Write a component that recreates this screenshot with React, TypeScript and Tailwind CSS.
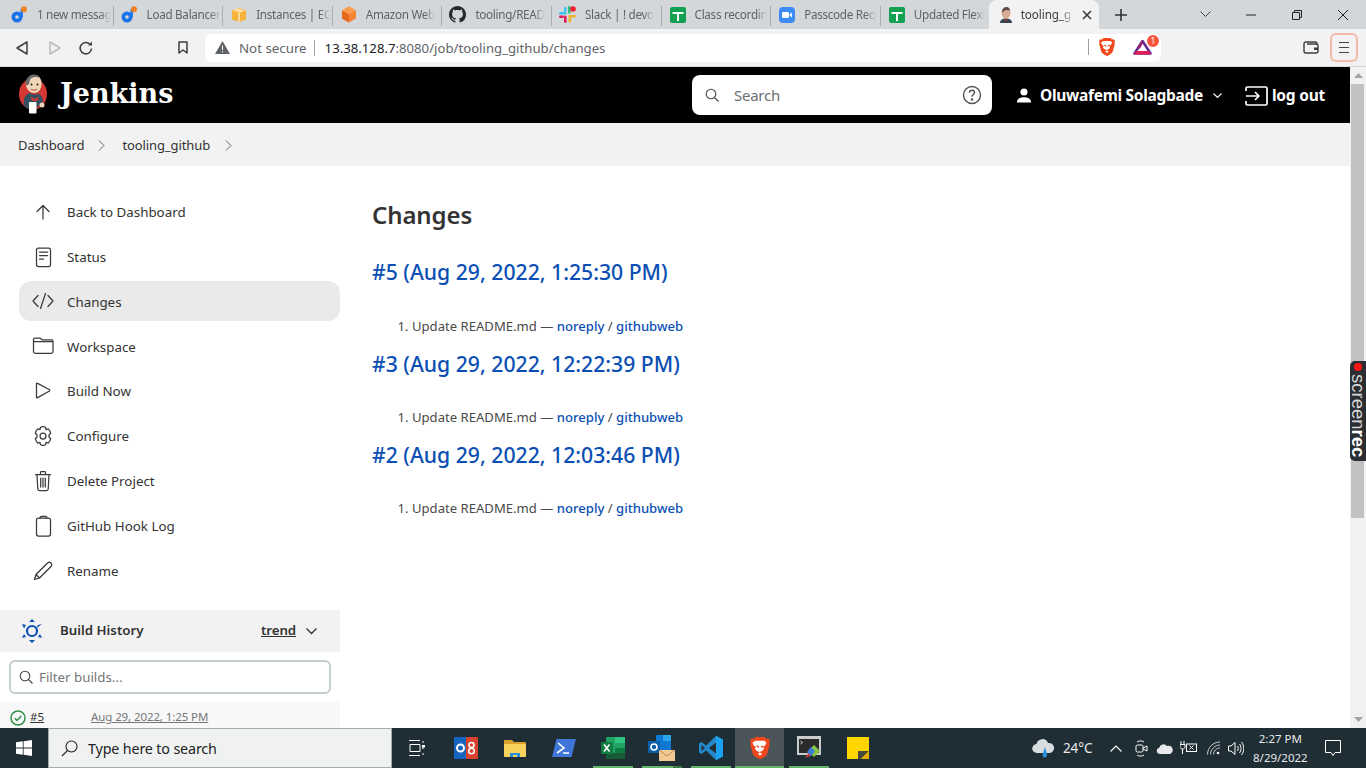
import React from "react";

function Sheets() {
  return (
    <svg width="16" height="16" viewBox="0 0 16 16">
      <rect width="16" height="16" rx="2" fill="#12a150" />
      <path d="M2.500 5h11v2h-4.500v7h-2V7H2.500z" fill="#fff" />
    </svg>
  );
}
function Drop() {
  return (
    <svg width="17" height="17" viewBox="0 0 17 17">
      <circle cx="6" cy="11" r="5.500" fill="#1a73e8" />
      <circle cx="6" cy="11" r="1.800" fill="#d3d7da" />
      <rect x="9.500" y="3" width="2.400" height="8" fill="#1a73e8" />
      <circle cx="13" cy="3.200" r="3" fill="#f58220" />
    </svg>
  );
}
function Box() {
  return (
    <svg width="16" height="16" viewBox="0 0 16 16">
      <path d="M1 3.500 8 1l7 2.500v9L8 15l-7-2.500z" fill="#f7b23b" />
      <path d="M1 3.500 8 6l7-2.500L8 1z" fill="#fcd079" />
      <path d="M8 6v9" stroke="#fff" strokeWidth="1" />
      <path d="M4.500 2.200 11.500 4.800" stroke="#fff" strokeWidth="0.800" />
    </svg>
  );
}
function Hex() {
  return (
    <svg width="16" height="17" viewBox="0 0 16 17">
      <path d="M8 .5 15 4.500v8L8 16.500 1 12.500v-8z" fill="#f58536" />
      <path d="M8 .5 15 4.500 8 8.500 1 4.500z" fill="#fb9d50" />
      <path d="M8 8.500v8L1 12.500v-8z" fill="#e8691d" />
    </svg>
  );
}
function GitHubMark() {
  return (
    <svg width="17" height="17" viewBox="0 0 16 16" fill="#24292f">
      <path d="M8 0C3.580 0 0 3.580 0 8c0 3.540 2.290 6.530 5.470 7.590.4.070.55-.17.55-.38 0-.19-.01-.82-.01-1.490-2.010.37-2.530-.49-2.690-.94-.09-.23-.48-.94-.82-1.130-.28-.15-.68-.52-.01-.53.63-.01 1.080.58 1.230.82.72 1.210 1.870.87 2.330.66.07-.52.28-.87.51-1.070-1.780-.2-3.640-.89-3.640-3.950 0-.87.31-1.590.82-2.150-.08-.2-.36-1.020.08-2.120 0 0 .67-.21 2.200.82.64-.18 1.320-.27 2-.27s1.360.09 2 .27c1.530-1.040 2.200-.82 2.200-.82.44 1.100.16 1.920.08 2.120.51.56.82 1.270.82 2.150 0 3.070-1.870 3.750-3.650 3.950.29.25.54.73.54 1.480 0 1.070-.01 1.930-.01 2.200 0 .21.15.46.55.38A8.010 8.010 0 0 0 16 8c0-4.420-3.580-8-8-8z" />
    </svg>
  );
}
function Slack() {
  return (
    <svg width="17" height="17" viewBox="0 0 17 17">
      <rect x="0" y="6" width="7.500" height="2.600" rx="1.300" fill="#36c5f0" />
      <rect x="5" y="1" width="2.600" height="5" rx="1.300" fill="#36c5f0" />
      <rect x="9" y="0" width="2.600" height="7.500" rx="1.300" fill="#2eb67d" />
      <circle cx="14" cy="3" r="2.800" fill="#f01e2c" />
      <rect x="9.500" y="9" width="7.500" height="2.600" rx="1.300" fill="#ecb22e" />
      <rect x="9.500" y="11" width="2.600" height="5.500" rx="1.300" fill="#ecb22e" />
      <rect x="5" y="9.500" width="2.600" height="7.500" rx="1.300" fill="#e01e5a" />
      <rect x="0" y="9.500" width="5" height="2.600" rx="1.300" fill="#e01e5a" />
    </svg>
  );
}
function Zoom() {
  return (
    <svg width="16" height="16" viewBox="0 0 16 16">
      <rect width="16" height="16" rx="4" fill="#3d8bf5" />
      <rect x="3" y="5" width="7" height="6" rx="1.200" fill="#fff" />
      <path d="M10.500 7.500 13 5.500v5l-2.500-2z" fill="#fff" />
    </svg>
  );
}
function JenkinsHead({ size = 16 }: { size?: number }) {
  return (
    <svg width={size} height={size} viewBox="0 0 16 16">
      <ellipse cx="8" cy="6" rx="4.500" ry="5.500" fill="#d9ab94" />
      <path d="M4 5c0-3 2-5 4.500-5S12 2 12 4c-2-1.500-5-1.500-6 0-.5 1-1 1.500-2 1z" fill="#5c4a42" />
      <path d="M2 16c0-3 2-4.500 6-4.500s6 1.500 6 4.500z" fill="#33424f" />
      <path d="M6 12.500 8 14l2-1.500-2-.5z" fill="#c6362c" />
    </svg>
  );
}
function JenkinsLogo() {
  return (
    <svg width="29" height="40" viewBox="0 0 29 40">
      <ellipse cx="14" cy="20" rx="14" ry="15.500" fill="#d33833" />
      <path d="M7 12c-1-6 3-11 8-11 5.500 0 8 5 7.500 9.500-.3 4-2 8-7 8.500-4 .3-7-3-8.500-7z" fill="#f0d6b7" />
      <path d="M7 11c-1-6 3-10.500 8-10.500 3 0 5 1.500 6 3.500-3-1.500-7-1.500-9.500 1-1 1.500-1 4-2 5.500-.8.700-1.800 1.300-2.500.500z" fill="#6d6b6d" />
      <path d="M5 31c-1-6 1-11 6-12 3 2 6 2 8 .5 4 2 5 5 5 8-1 1-3 2-3.500 4-2 2-5 4-9 4-3-.5-5-2-6.500-4.500z" fill="#335061" />
      <path d="M12 22.500 16 25l3.500-2.500-.5 4-3 .5-3.500-.5z" fill="#d33833" />
      <rect x="10" y="28" width="7.500" height="11.500" rx="1" fill="#fff" />
      <circle cx="23" cy="31" r="2.500" fill="#f0d6b7" />
      <circle cx="12.500" cy="10.500" r="1" fill="#222" />
      <circle cx="18.500" cy="10.500" r="1" fill="#222" />
      <path d="M12 15c2 1.500 4.500 1.500 6 0" stroke="#a04a3c" strokeWidth="1" fill="none" />
    </svg>
  );
}
function BraveLion({ size = 18 }: { size?: number }) {
  return (
    <svg width={size} height={size * 1.130} viewBox="0 0 18 20.500">
      <path d="M5 0h8l1.500 1.600 2-.3L18 3.200l-.6 1.800.5 1.500-2.300 8.500c-.4 1.400-1 2-2.200 2.800L9.700 20.200c-.5.300-.9.300-1.400 0l-3.700-2.400c-1.200-.8-1.800-1.400-2.200-2.800L.1 6.500.6 5 0 3.200 1.500 1.300l2 .3z" fill="#f1471d" />
      <path d="M5 3.500h8l1.800 1.500-1.300 3-1.800 1 1 1.500-1.500 2-1.700.6L9 14.500l-1.500-1.400-1.700-.6-1.500-2 1-1.500-1.800-1-1.300-3zM7 15l2-.5 2 .5-2 2z" fill="#fff" />
      <path d="M6 7.500l2 .8v1.500l-2-.8zM12 7.500l-2 .8v1.500l2-.8z" fill="#f1471d" />
    </svg>
  );
}
function Tab({ icon, text, w = "w-[109.600px]", sep = true }: { icon: React.ReactNode; text: string; w?: string; sep?: boolean }) {
  return (
    <div className={`${w} h-full flex items-center shrink-0`}>
      <div className="w-[24px] flex justify-end shrink-0">{icon}</div>
      <div className="ml-[9px] whitespace-nowrap text-[11.700px] tracking-[-0.300px] text-[#5f6368] [mask-image:linear-gradient(to_right,black_85%,transparent)]">
        {text}
      </div>
      {sep && <div className="ml-auto w-px h-[20px] mt-[2px] bg-[#a9adb0]" />}
    </div>
  );
}

function Ico({ children }: { children: React.ReactNode }) {
  return (
    <svg width="24" height="24" viewBox="0 0 24 24" fill="none" stroke="#3a3a3a" strokeWidth="1.250" strokeLinecap="round" strokeLinejoin="round">
      {children}
    </svg>
  );
}
const nav: { label: string; icon: React.ReactNode; active?: boolean }[] = [
  { label: "Back to Dashboard", icon: <Ico><path d="M12 19V5.500M6 11.500l6-6 6 6" /></Ico> },
  { label: "Status", icon: <Ico><rect x="5.500" y="3" width="14" height="18.500" rx="2" /><path d="M8.500 7h8M8.500 10.500h8M8.500 14h4" /></Ico> },
  { label: "Changes", active: true, icon: <Ico><path d="M7 6.500 2 12l5 5.500M17 6.500l5 5.500-5 5.500M14.500 4.500l-5 15" /></Ico> },
  { label: "Workspace", icon: <Ico><path d="M2.500 5.500c0-1 .7-1.500 1.500-1.500h5c1 0 1.200 1.800 2.700 1.800h8.800c1 0 1.500.7 1.500 1.700v10c0 1-.7 1.800-1.800 1.800H4.300c-1 0-1.800-.8-1.800-1.800zM2.500 7.500h19" /></Ico> },
  { label: "Build Now", icon: <Ico><path d="M5.500 4.500v14c0 .4.400.6.700.4L18.500 12c.4-.3.400-.9 0-1.200L6.200 4.100c-.3-.2-.7 0-.7.4z" /></Ico> },
  { label: "Configure", icon: <Ico><circle cx="12" cy="12" r="3" /><path d="M9.500 3.200c1.600-.8 3.400-.8 5 0l.5 2.400 2.300-.7c1.200 1.200 2 2.800 2.400 4.300L18 11v2l1.700 1.700c-.4 1.600-1.200 3.100-2.400 4.400L15 18.400l-.5 2.400c-1.600.7-3.400.7-5 0L9 18.400l-2.300.7c-1.200-1.300-2-2.800-2.400-4.400L6 13v-2L4.300 9.200c.4-1.500 1.200-3.100 2.400-4.300L9 5.600z" /></Ico> },
  { label: "Delete Project", icon: <Ico><path d="M4.500 5.500h15M9.500 5.500V3.300c0-.4.300-.8.800-.8h3.400c.5 0 .8.400.8.800v2.200M6 5.500l.8 14.500c0 .8.700 1.500 1.500 1.500h7.400c.8 0 1.500-.7 1.500-1.500L18 5.500M9.700 9v9M12 9v9M14.300 9v9" /></Ico> },
  { label: "GitHub Hook Log", icon: <Ico><rect x="5.500" y="4" width="14" height="18" rx="2" /><path d="M9 4c0-1 .7-1.700 1.700-1.700h3.600c1 0 1.700.7 1.700 1.700" /></Ico> },
  { label: "Rename", icon: <Ico><path d="M3.500 20.500l1.500-5L16.500 4c1-1 2.500-1 3.500 0s1 2.500 0 3.500L8.500 19zM5 15.500l3.500 3.500" /></Ico> },
];

function Build({ id, date, first }: { id: string; date: string; first?: boolean }) {
  return (
    <div className={first ? "" : "pt-[1px]"}>
      <h2 className="text-[21.200px] leading-[30px] font-medium text-[#0b4fb4] h-[30px]">
        {id} ({date})
      </h2>
      <ol className={`${first ? "mt-[30px]" : "mt-[29px]"} pl-[40px] list-decimal text-[13.100px] leading-[19px] text-[#4a4a4a] h-[19px]`}>
        <li>
          Update README.md — <a className="font-medium text-[#0b4fb4]">noreply</a> / <a className="font-medium text-[#0b4fb4]">githubweb</a>
        </li>
      </ol>
    </div>
  );
}

function TaskIcon({ children, active, run, dark }: { children: React.ReactNode; active?: boolean; run?: boolean; dark?: boolean }) {
  return (
    <div className={`w-[49px] h-full shrink-0 flex items-center justify-center relative ${active ? "bg-[#4b5559]" : ""}`}>
      {children}
      {run && (
        <div className={`absolute bottom-0 h-[2px] bg-[#63b568] ${active ? "inset-x-0" : "inset-x-[4.500px]"}`}>
          {dark && <div className="absolute right-0 top-0 h-full w-[9px] bg-[#3e7a45]" />}
        </div>
      )}
    </div>
  );
}

export default function App() {
  return (
    <div className="w-[1366px] h-[768px] overflow-hidden flex flex-col relative bg-white text-[#333] font-['Noto_Sans','Open_Sans',sans-serif]">
      {/* tab strip */}
      <div className="h-[29px] bg-[#d3d7da] flex items-stretch shrink-0 pl-[4px]">
        <Tab icon={<Drop />} text="1 new messag" />
        <Tab icon={<Drop />} text="Load Balancer" />
        <Tab icon={<Box />} text="Instances | EC" />
        <Tab icon={<Hex />} text="Amazon Web" />
        <Tab icon={<GitHubMark />} text="tooling/READ" />
        <Tab icon={<Slack />} text="Slack | ! devo" />
        <Tab icon={<Sheets />} text="Class recordin" />
        <Tab icon={<Zoom />} text="Passcode Req" />
        <Tab w="w-[108px]" sep={false} icon={<Sheets />} text="Updated Flexi" />
        <div className="w-[110px] h-full bg-[#f2f2f2] rounded-t-[8px] flex items-center shrink-0 pl-[9px]">
          <JenkinsHead />
          <div className="ml-[7px] w-[53px] whitespace-nowrap text-[11.700px] tracking-[-0.100px] text-[#3c4043] [mask-image:linear-gradient(to_right,black_75%,transparent)]">tooling_g</div>
          <svg className="ml-[8px]" width="10" height="10" viewBox="0 0 10 10" stroke="#333" strokeWidth="1.500"><path d="M1 1l8 8M9 1l-8 8" /></svg>
        </div>
        <div className="ml-[16px] flex items-center">
          <svg width="12" height="12" viewBox="0 0 12 12" stroke="#333" strokeWidth="1.600"><path d="M6 0v12M0 6h12" /></svg>
        </div>
        <div className="ml-auto flex items-center h-full">
          <div className="w-[46px] flex justify-center"><svg width="11" height="7" viewBox="0 0 11 7" stroke="#444" fill="none"><path d="M.5.500l5 5 5-5" /></svg></div>
          <div className="w-[46px] flex justify-center"><svg width="10" height="2" viewBox="0 0 10 2" stroke="#222"><path d="M0 1h10" /></svg></div>
          <div className="w-[46px] flex justify-center"><svg width="10" height="10" viewBox="0 0 10 10" stroke="#222" fill="none"><path d="M.5 2.500h7v7h-7zM2.500 2.500v-2h7v7h-2" /></svg></div>
          <div className="w-[46px] flex justify-center"><svg width="10" height="10" viewBox="0 0 10 10" stroke="#222" fill="none"><path d="M0 0l10 10M10 0L0 10" /></svg></div>
        </div>
      </div>
      {/* toolbar */}
      <div className="h-[38px] bg-[#f2f2f2] border-b border-[#d6d6d6] flex items-center shrink-0">
        <svg className="ml-[16px]" width="12" height="14" viewBox="0 0 12 14" fill="none" stroke="#3c4043" strokeWidth="1.500" strokeLinejoin="round"><path d="M11 1v12L1 7z" /></svg>
        <svg className="ml-[21px]" width="12" height="14" viewBox="0 0 12 14" fill="none" stroke="#b9bbbd" strokeWidth="1.500" strokeLinejoin="round"><path d="M1 1v12l10-6z" /></svg>
        <svg className="ml-[18px]" width="14" height="14" viewBox="0 0 14 14" fill="none" stroke="#3c4043" strokeWidth="1.600"><path d="M12.500 7.500a5.700 5.700 0 1 1-1.500-4.200" /><path d="M13 .5v4h-4" fill="#3c4043" stroke="none" /></svg>
        <svg className="ml-[85px]" width="10" height="13" viewBox="0 0 10 13" fill="none" stroke="#3c4043" strokeWidth="1.500" strokeLinejoin="round"><path d="M1 1h8v11L5 9l-4 3z" /></svg>
        <div className="ml-[17px] w-[956px] h-[28px] bg-white rounded-[6px] flex items-center text-[#5f6368]">
          <svg className="ml-[10px]" width="15" height="13" viewBox="0 0 15 13"><path d="M7.500 0 15 13H0z" fill="#5f6368" /><path d="M7 4.500h1V9H7zM7 10h1v1.200H7z" fill="#fff" /></svg>
          <span className="ml-[9px] mt-[2px] text-[13.300px]">Not secure</span>
          <div className="ml-[7px] w-px h-[16px] bg-[#9aa0a6]" />
          <span className="ml-[10px] mt-[2px] text-[13.180px]"><span className="text-[#202124]">13.38.128.7</span>:8080/job/tooling_github/changes</span>
          <div className="ml-auto flex items-center">
            <div className="w-px h-[16px] bg-[#9aa0a6]" />
            <div className="ml-[10px]"><BraveLion size={16} /></div>
            <div className="ml-[18px] relative">
              <svg width="19" height="16" viewBox="0 0 19 16"><path d="M9.500 2 17.500 14.500h-16z" fill="#fff" stroke="#662d91" strokeWidth="2.600" strokeLinejoin="round" /><path d="M1 15.500h17l-2-3.500H3z" fill="#e01e5a" /><path d="M9.500 1 4.500 9.500l2.500 0 2.500-4.500z" fill="#9e1f63" /></svg>
              <div className="absolute -top-[4px] -right-[7px] w-[12px] h-[12px] rounded-full bg-[#f8553e] text-white text-[8px] leading-[12px] text-center">1</div>
            </div>
            <div className="w-[9px]" />
          </div>
        </div>
        <svg className="ml-[142px] -mr-[1px]" width="16" height="13" viewBox="0 0 16 13" fill="none" stroke="#3c4043" strokeWidth="1.400"><path d="M14 3V2.500C14 1.500 13.500 1 12.500 1H3C1.800 1 1 1.800 1 3v7c0 1.200.8 2 2 2h10c1 0 2-.8 2-2V4.500C15 3.500 14 3 13 3H4" /><path d="M11 6.500h4v2.500h-4z" fill="#3c4043" stroke="none" /></svg>
        <div className="ml-[12px] w-[28px] h-[29px] border-2 border-[#f5b9aa] rounded-[6px] flex flex-col items-center justify-center gap-[3.500px]">
          <div className="w-[10px] h-[1.500px] bg-[#444]" />
          <div className="w-[10px] h-[1.500px] bg-[#444]" />
          <div className="w-[10px] h-[1.500px] bg-[#444]" />
        </div>
      </div>
      {/* page + scrollbar */}
      <div className="flex-1 min-h-0 flex">
        <div className="w-[1350px] shrink-0 flex flex-col min-h-0 overflow-hidden">
          {/* Jenkins header */}
          <div className="h-[56px] shrink-0 bg-black flex items-center">
            <div className="ml-[19px] mt-[-2px] w-[29px] shrink-0"><JenkinsLogo /></div>
            <span className="ml-[12px] mt-[-2px] w-[123px] shrink-0 text-white text-[27px] font-bold font-['DejaVu_Serif',serif]">Jenkins</span>
            <div className="ml-[509px] w-[300px] h-[40px] bg-white rounded-[8px] flex items-center shrink-0">
              <svg className="ml-[13px]" width="14" height="14" viewBox="0 0 14 14" fill="none" stroke="#444" strokeWidth="1.100"><circle cx="6" cy="6" r="4.800" /><path d="M9.500 9.500 13.500 13.500" /></svg>
              <span className="ml-[15px] mt-[1px] text-[15px] tracking-[-0.250px] text-[#6b6f72]">Search</span>
              <svg className="ml-auto mr-[10px]" width="20" height="20" viewBox="0 0 20 20" fill="none" stroke="#555" strokeWidth="1.400"><circle cx="10" cy="10" r="8.500" /><path d="M7.500 7.800c0-1.500 1.200-2.500 2.500-2.500s2.500 1 2.500 2.300c0 2-2.500 2.100-2.500 4.200" /><circle cx="10" cy="14.500" r=".6" fill="#555" /></svg>
            </div>
            <svg className="ml-[24px] mt-[1px] shrink-0" width="16" height="17" viewBox="0 0 18 18" fill="#fff"><circle cx="9" cy="5" r="4" /><path d="M1 17c0-4 3.500-6 8-6s8 2 8 6z" /></svg>
            <span className="ml-[8px] mt-[2px] text-white font-bold text-[15.500px] tracking-[-0.300px] whitespace-nowrap">Oluwafemi Solagbade</span>
            <svg className="ml-[10px] mt-[1px] shrink-0" width="9" height="6" viewBox="0 0 9 6" fill="none" stroke="#fff" strokeWidth="1.100"><path d="M.5.500l4 4 4-4" /></svg>
            <svg className="ml-[23px] mt-[1px] shrink-0" width="23" height="20" viewBox="0 0 23 20" fill="none" stroke="#fff" strokeWidth="1.700" strokeLinejoin="round"><path d="M1 5V2.500C1 1.500 1.700 1 2.500 1h18c.8 0 1.500.5 1.500 1.500v15c0 1-.7 1.500-1.500 1.500h-18C1.700 19 1 18.500 1 17.500V15" /><path d="M1 10h13M10 6l4 4-4 4" /></svg>
            <span className="ml-[4px] mt-[2px] text-white font-bold text-[15.500px] tracking-[-0.200px] whitespace-nowrap">log out</span>
          </div>
          {/* breadcrumb */}
          <div className="h-[43px] shrink-0 bg-[#f2f2f2] flex items-center text-[#333]">
            <span className="ml-[18px] mt-[2px] text-[13px] tracking-[-0.100px] whitespace-nowrap">Dashboard</span>
            <svg className="ml-[14px] mt-[1px]" width="7" height="11" viewBox="0 0 7 11" fill="none" stroke="#666" strokeWidth="1"><path d="M1 .5l5 5-5 5" /></svg>
            <span className="ml-[17px] mt-[2px] text-[13px] tracking-[-0.100px] whitespace-nowrap">tooling_github</span>
            <svg className="ml-[15px] mt-[1px]" width="7" height="11" viewBox="0 0 7 11" fill="none" stroke="#666" strokeWidth="1"><path d="M1 .5l5 5-5 5" /></svg>
          </div>
          {/* body */}
          <div className="flex-1 min-h-0 flex overflow-hidden">
            <aside className="w-[340px] shrink-0 pt-[23.200px] flex flex-col">
              {nav.map((n) => (
                <div key={n.label} className="h-[44.880px] ml-[19px] flex items-center shrink-0">
                  <div className={`w-full h-[40px] rounded-[12px] flex items-center pl-[12px] ${n.active ? "bg-[#eaeaea]" : ""}`}>
                    <div className="w-[24px] h-[24px] shrink-0">{n.icon}</div>
                    <span className="ml-[12px] mt-[2.600px] mb-[2px] text-[13.350px] text-[#333] whitespace-nowrap">{n.label}</span>
                  </div>
                </div>
              ))}
              <div className="mt-[17px] h-[42px] shrink-0 bg-[#f2f2f2] flex items-center">
                <svg className="ml-[21px]" width="22" height="24" viewBox="0 0 22 24" fill="#0b4fb4"><circle cx="11" cy="12" r="5" fill="none" stroke="#0b4fb4" strokeWidth="2.200" /><path d="M11 0l3 3H8zM11 24l-3-3h6zM1 5l4 1-2 3.500zM21 5l-4 1-2 3.500zM1 19l2-4 2 3zM21 19l-2-4-2 3z" /></svg>
                <span className="ml-[17px] text-[13.300px] font-semibold">Build History</span>
                <span className="ml-auto text-[13.300px] font-semibold underline tracking-[-0.100px]">trend</span>
                <svg className="ml-[10px] mr-[23px]" width="11" height="7" viewBox="0 0 11 7" fill="none" stroke="#333" strokeWidth="1.300"><path d="M.5.500l5 5 5-5" /></svg>
              </div>
              <div className="mt-[8px] mx-[9px] h-[34px] shrink-0 border-2 border-[#c4cdd1] rounded-[6px] flex items-center">
                <svg className="ml-[8px]" width="14" height="14" viewBox="0 0 14 14" fill="none" stroke="#444" strokeWidth="1.100"><circle cx="6" cy="6" r="4.800" /><path d="M9.500 9.500 13.500 13.500" /></svg>
                <span className="ml-[6px] mt-[2px] text-[13.300px] text-[#777]">Filter builds...</span>
              </div>
              <div className="mt-[8px] h-[30px] shrink-0 bg-[#f8f8f8] flex items-center">
                <svg className="ml-[10px] mt-[1px]" width="16" height="16" viewBox="0 0 16 16" fill="none" stroke="#2f8f46" strokeWidth="1.500"><circle cx="8" cy="8" r="7" /><path d="M4.800 8.200 7 10.400l4.200-4.400" /></svg>
                <span className="ml-[4px] text-[11.500px] underline text-[#333]">#5</span>
                <span className="ml-[47px] text-[11.500px] underline text-[#777] tracking-[-0.100px]">Aug 29, 2022, 1:25 PM</span>
              </div>
            </aside>
            <main className="flex-1 pl-[32px] pt-[31px]">
              <h1 className="text-[24px] font-semibold leading-[36px] h-[36px] text-[#333] tracking-[-0.100px]">Changes</h1>
              <div className="mt-[24px] flex flex-col gap-[12px]">
                <Build first id="#5" date="Aug 29, 2022, 1:25:30 PM" />
                <Build id="#3" date="Aug 29, 2022, 12:22:39 PM" />
                <Build id="#2" date="Aug 29, 2022, 12:03:46 PM" />
              </div>
            </main>
          </div>
        </div>
        {/* scrollbar */}
        <div className="w-[16px] shrink-0 bg-[#f1f1f1] flex flex-col items-center">
          <svg className="mt-[6px]" width="9" height="5" viewBox="0 0 9 5" fill="#a3a3a3"><path d="M4.500 0 9 5H0z" /></svg>
          <div className="mt-[6px] w-[13px] -ml-[1px] h-[434px] bg-[#c1c1c1]" />
          <svg className="mt-auto mb-[6px]" width="9" height="5" viewBox="0 0 9 5" fill="#a3a3a3"><path d="M4.500 5 9 0H0z" /></svg>
        </div>
      </div>
      {/* taskbar */}
      <div className="h-[40px] shrink-0 bg-[#1f2d35] flex items-center">
        <div className="w-[48px] flex justify-center">
          <svg width="16" height="16" viewBox="0 0 16 16" fill="#fff"><path d="M0 2.300 6.800 1.300v6.300H0zM7.600 1.200 16 0v7.600H7.600zM0 8.400h6.800v6.300L0 13.700zM7.600 8.400H16V16l-8.400-1.200z" /></svg>
        </div>
        <div className="w-[344px] h-full bg-[#f0f2f2] border border-[#a6acaf] flex items-center">
          <svg className="ml-[12px]" width="17" height="17" viewBox="0 0 17 17" fill="none" stroke="#222" strokeWidth="1.100"><circle cx="10.500" cy="6.500" r="5.500" /><path d="M6.500 10.500 1 16" /></svg>
          <span className="ml-[10px] mt-[2px] text-[14.300px] text-[#222] tracking-[-0.150px]">Type here to search</span>
        </div>
        <div className="flex h-full items-center">
          <TaskIcon>
            <svg width="16" height="16" viewBox="0 0 16 16" fill="none" stroke="#fff" strokeWidth="1"><path d="M0 .5h11M0 15.500h11M1 4.500h10v7H1zM14 1v2M14 7v2M14 13v2" /><rect x="13" y="5" width="3" height="2.500" fill="#fff" stroke="none" /></svg>
          </TaskIcon>
          <TaskIcon>
            <svg width="24" height="24" viewBox="0 0 24 24">
              <rect x="0" y="1" width="13" height="22" rx="1" fill="#1565c0" />
              <rect x="12" y="1" width="12" height="22" rx="1" fill="#d9422e" />
              <circle cx="6.500" cy="12" r="3.500" fill="none" stroke="#fff" strokeWidth="2" />
              <circle cx="17.500" cy="9" r="2.500" fill="none" stroke="#fff" strokeWidth="1.500" />
              <circle cx="17.500" cy="15" r="2.800" fill="none" stroke="#fff" strokeWidth="1.500" />
            </svg>
          </TaskIcon>
          <TaskIcon>
            <svg width="22" height="18" viewBox="0 0 22 18">
              <path d="M0 2c0-.6.4-1 1-1h7l2 2h11c.6 0 1 .4 1 1v3H0z" fill="#d9a12e" />
              <path d="M0 5h22v12c0 .6-.4 1-1 1H1c-.6 0-1-.4-1-1z" fill="#f7d25c" />
              <path d="M6 14h10v4H6z" fill="#2a8fd8" />
              <path d="M9 16h4v2H9z" fill="#f7d25c" />
            </svg>
          </TaskIcon>
          <TaskIcon>
            <svg width="24" height="18" viewBox="0 0 24 18">
              <path d="M4.500 0H24l-4.500 18H0z" fill="#3f76d8" />
              <path d="M6 4l6 5-7 5M11 14h6" stroke="#fff" strokeWidth="1.600" fill="none" />
            </svg>
          </TaskIcon>
          <TaskIcon run>
            <svg width="24" height="22" viewBox="0 0 24 22">
              <rect x="5" y="0" width="19" height="22" rx="1" fill="#21a366" />
              <rect x="14" y="0" width="10" height="6" fill="#33c481" />
              <rect x="14" y="11" width="10" height="5" fill="#107c41" />
              <rect x="5" y="16" width="19" height="6" fill="#185c37" />
              <rect x="0" y="5" width="12" height="12" rx="1" fill="#107c41" />
              <path d="M3 7.500l5.500 7M8.500 7.500 3 14.500" stroke="#fff" strokeWidth="1.600" />
            </svg>
          </TaskIcon>
          <TaskIcon run dark>
            <svg width="27" height="26" viewBox="0 0 27 26">
              <rect x="8" y="0" width="15" height="17" rx="1" fill="#0f78d4" />
              <rect x="15" y="0" width="8" height="6" fill="#28a8ea" />
              <rect x="0" y="6" width="12" height="12" rx="1" fill="#0a5fa8" />
              <circle cx="6" cy="12" r="3" fill="none" stroke="#fff" strokeWidth="1.600" />
              <rect x="11" y="15" width="16" height="11" fill="#f2c893" />
              <path d="M11 15l8 6 8-6" stroke="#b78954" fill="none" />
            </svg>
          </TaskIcon>
          <TaskIcon run>
            <svg width="24" height="24" viewBox="0 0 24 24">
              <path d="M17 0 24 3.500v17L17 24 7 14.500 2.500 18 0 16.500v-9L2.500 6 7 9.500z" fill="#2489ca" />
              <path d="M17 0 24 3.500v17L17 24z" fill="#1aa1f1" />
              <path d="M17 6.500 10 12l7 5.500z" fill="#1f2d35" />
              <path d="M2.500 9 6 12l-3.500 3z" fill="#1f2d35" />
            </svg>
          </TaskIcon>
          <TaskIcon run active><BraveLion size={20} /></TaskIcon>
          <TaskIcon run>
            <svg width="24" height="24" viewBox="0 0 24 24">
              <rect x="0" y="0" width="24" height="19" fill="#c9cdd0" />
              <rect x="2" y="3" width="20" height="14" fill="#2b2b2b" />
              <path d="M3.500 5l2 1.500-2 1.500" stroke="#fff" fill="none" strokeWidth=".8" />
              <path d="M8 22l6-9 4 5z" fill="#d83b3b" />
              <path d="M14 12l3-3 6 6-6 6-3-3z" fill="#88c540" />
              <path d="M10 16l4-5 4 4-4 5z" fill="#3b7dd8" />
            </svg>
          </TaskIcon>
          <TaskIcon>
            <svg width="22" height="22" viewBox="0 0 22 22"><path d="M0 0h22v22H0z" fill="#ffd500" /><path d="M11 22v-7.500c0-.5.400-.5.500-.5H22L14 22z" fill="#4a4a3a" /><path d="M22 14v8h-8z" fill="#e2ad00" /></svg>
          </TaskIcon>
        </div>
        <div className="ml-[150px] flex items-center h-full text-white">
          <svg width="23" height="19" viewBox="0 0 23 19"><path d="M5 14a4.500 4.500 0 0 1-.5-9A6 6 0 0 1 16 4a5 5 0 0 1 2 10z" fill="#d8dde0" /><path d="M13 8l2 7c.3 2-1 3.500-2.500 3.500S10 16 11 14z" fill="#2a8fd8" /></svg>
          <span className="ml-[8px] text-[13.500px] tracking-[-0.100px] text-[#e8eaeb]">24°C</span>
          <svg className="ml-[18px]" width="12" height="7" viewBox="0 0 12 7" fill="none" stroke="#fff" strokeWidth="1.100"><path d="M.5 6.500l5.500-5.500 5.500 5.500" /></svg>
          <svg className="ml-[13px]" width="13" height="17" viewBox="0 0 13 17" fill="none" stroke="#fff" strokeWidth="1"><rect x="1" y="5" width="7" height="7" rx="1.500" /><path d="M8 8l4-2v5l-4-2M2 2c2-1.500 5-1.500 7 0M2 15c2 1.500 5 1.500 7 0" /></svg>
          <svg className="ml-[8px]" width="17" height="11" viewBox="0 0 17 11" fill="#e6e8e9"><path d="M3.500 11a3.200 3.200 0 0 1-.3-6.300A4.500 4.500 0 0 1 11 3a3.600 3.600 0 0 1 3 8z" /></svg>
          <svg className="ml-[7px]" width="17" height="14" viewBox="0 0 17 14" fill="none" stroke="#fff" strokeWidth="1"><path d="M1 0v3M4 0v3M0 3.500h5V6c0 1-1 2-2.500 2S0 7 0 6zM2.500 8v5" /><rect x="6.500" y="3" width="10" height="7.500" /><path d="M9.500 4.500l4 4M13.500 4.500l-4 4" /></svg>
          <svg className="ml-[10px]" width="14" height="14" viewBox="0 0 14 14" fill="none" stroke="#c8cccf" strokeWidth="1"><path d="M.5 13.500C.5 6.500 6 1 13 1M3.500 13.500C3.500 8.500 8 4 13 4M6.500 13.500C6.500 10 9.500 7 13 7" /><circle cx="11" cy="12" r="1.300" fill="#fff" stroke="none" /></svg>
          <svg className="ml-[7px]" width="16" height="15" viewBox="0 0 16 15" fill="none" stroke="#fff" strokeWidth="1"><path d="M.5 5v5h2.500L7 13.500v-12L3 5zM9.500 5c1 1.500 1 3.500 0 5M11.500 3c2 2.500 2 6.500 0 9M13.500 1c3 3.500 3 9.500 0 13" /></svg>
          <div className="ml-[1px] w-[70px] flex flex-col items-center text-[11.500px] leading-[19px] text-[#e8eaeb]">
            <span>2:27 PM</span>
            <span>8/29/2022</span>
          </div>
          <svg className="ml-[10px]" width="16" height="16" viewBox="0 0 16 16" fill="none" stroke="#fff" strokeWidth="1"><path d="M.5.500h15v12H10l-2 3-2-3H.5z" /></svg>
        </div>
      </div>
      {/* screenrec badge */}
      <div className="absolute left-[1350px] top-[361px] w-[16px] h-[100px] bg-[#2a2e32] rounded-l-[5px] flex flex-col items-center pt-[2px]">
        <div className="w-[8px] h-[8px] rounded-full bg-[#ff1414] shrink-0" />
        <div className="[writing-mode:vertical-rl] text-[18.500px] leading-[16px] text-[#d8d8d8] whitespace-nowrap font-['Liberation_Sans',sans-serif] mt-[3px]">screen<span className="font-bold text-white">rec</span></div>
      </div>
    </div>
  );
}
